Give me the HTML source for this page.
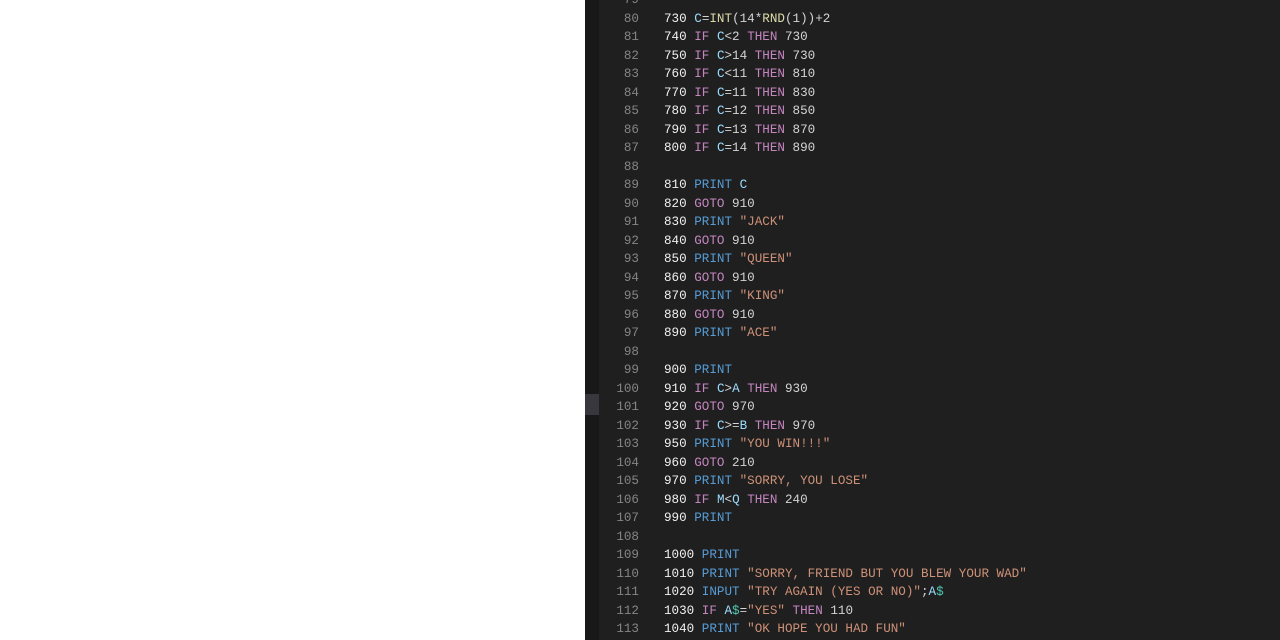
<!DOCTYPE html>
<html><head><meta charset="utf-8"><style>
html,body{margin:0;padding:0;width:1280px;height:640px;overflow:hidden;background:#fff}
#ed{position:absolute;left:585px;top:0;width:695px;height:640px;background:#1f1f1f}
#strip{position:absolute;left:0;top:0;width:14px;height:640px;background:#181818}
#hl{position:absolute;left:0;top:394px;width:14px;height:21px;background:#37373d}
.r{position:absolute;left:0;height:18.5px;line-height:18.5px;font-family:"Liberation Mono",monospace;font-size:12.6px;white-space:pre;color:#d4d4d4}
.n{position:absolute;left:0;color:#858585;text-align:right;width:54px}
.c{position:absolute;left:79px}
.l{color:#f0f0f0}
.k{color:#c586c0}.p{color:#569cd6}.v{color:#9cdcfe}.s{color:#ce9178}.f{color:#dcdcaa}.t{color:#4ec9b0}
#x{position:absolute;left:585px;top:1px}
</style></head><body>
<div id="ed"><div id="strip"></div><div id="hl"></div></div>
<div id="x">
<div class="r" style="top:-9.8px"><span class="n">79</span></div>
<div class="r" style="top:8.7px"><span class="n">80</span><span class="c"><span class="l">730</span> <span class="v">C</span>=<span class="f">INT</span>(14*<span class="f">RND</span>(1))+2</span></div>
<div class="r" style="top:27.2px"><span class="n">81</span><span class="c"><span class="l">740</span> <span class="k">IF</span> <span class="v">C</span>&lt;2 <span class="k">THEN</span> 730</span></div>
<div class="r" style="top:45.7px"><span class="n">82</span><span class="c"><span class="l">750</span> <span class="k">IF</span> <span class="v">C</span>&gt;14 <span class="k">THEN</span> 730</span></div>
<div class="r" style="top:64.2px"><span class="n">83</span><span class="c"><span class="l">760</span> <span class="k">IF</span> <span class="v">C</span>&lt;11 <span class="k">THEN</span> 810</span></div>
<div class="r" style="top:82.7px"><span class="n">84</span><span class="c"><span class="l">770</span> <span class="k">IF</span> <span class="v">C</span>=11 <span class="k">THEN</span> 830</span></div>
<div class="r" style="top:101.2px"><span class="n">85</span><span class="c"><span class="l">780</span> <span class="k">IF</span> <span class="v">C</span>=12 <span class="k">THEN</span> 850</span></div>
<div class="r" style="top:119.7px"><span class="n">86</span><span class="c"><span class="l">790</span> <span class="k">IF</span> <span class="v">C</span>=13 <span class="k">THEN</span> 870</span></div>
<div class="r" style="top:138.2px"><span class="n">87</span><span class="c"><span class="l">800</span> <span class="k">IF</span> <span class="v">C</span>=14 <span class="k">THEN</span> 890</span></div>
<div class="r" style="top:156.7px"><span class="n">88</span></div>
<div class="r" style="top:175.2px"><span class="n">89</span><span class="c"><span class="l">810</span> <span class="p">PRINT</span> <span class="v">C</span></span></div>
<div class="r" style="top:193.7px"><span class="n">90</span><span class="c"><span class="l">820</span> <span class="k">GOTO</span> 910</span></div>
<div class="r" style="top:212.2px"><span class="n">91</span><span class="c"><span class="l">830</span> <span class="p">PRINT</span> <span class="s">"JACK"</span></span></div>
<div class="r" style="top:230.7px"><span class="n">92</span><span class="c"><span class="l">840</span> <span class="k">GOTO</span> 910</span></div>
<div class="r" style="top:249.2px"><span class="n">93</span><span class="c"><span class="l">850</span> <span class="p">PRINT</span> <span class="s">"QUEEN"</span></span></div>
<div class="r" style="top:267.7px"><span class="n">94</span><span class="c"><span class="l">860</span> <span class="k">GOTO</span> 910</span></div>
<div class="r" style="top:286.2px"><span class="n">95</span><span class="c"><span class="l">870</span> <span class="p">PRINT</span> <span class="s">"KING"</span></span></div>
<div class="r" style="top:304.7px"><span class="n">96</span><span class="c"><span class="l">880</span> <span class="k">GOTO</span> 910</span></div>
<div class="r" style="top:323.2px"><span class="n">97</span><span class="c"><span class="l">890</span> <span class="p">PRINT</span> <span class="s">"ACE"</span></span></div>
<div class="r" style="top:341.7px"><span class="n">98</span></div>
<div class="r" style="top:360.2px"><span class="n">99</span><span class="c"><span class="l">900</span> <span class="p">PRINT</span></span></div>
<div class="r" style="top:378.7px"><span class="n">100</span><span class="c"><span class="l">910</span> <span class="k">IF</span> <span class="v">C</span>&gt;<span class="v">A</span> <span class="k">THEN</span> 930</span></div>
<div class="r" style="top:397.2px"><span class="n">101</span><span class="c"><span class="l">920</span> <span class="k">GOTO</span> 970</span></div>
<div class="r" style="top:415.7px"><span class="n">102</span><span class="c"><span class="l">930</span> <span class="k">IF</span> <span class="v">C</span>&gt;=<span class="v">B</span> <span class="k">THEN</span> 970</span></div>
<div class="r" style="top:434.2px"><span class="n">103</span><span class="c"><span class="l">950</span> <span class="p">PRINT</span> <span class="s">"YOU WIN!!!"</span></span></div>
<div class="r" style="top:452.7px"><span class="n">104</span><span class="c"><span class="l">960</span> <span class="k">GOTO</span> 210</span></div>
<div class="r" style="top:471.2px"><span class="n">105</span><span class="c"><span class="l">970</span> <span class="p">PRINT</span> <span class="s">"SORRY, YOU LOSE"</span></span></div>
<div class="r" style="top:489.7px"><span class="n">106</span><span class="c"><span class="l">980</span> <span class="k">IF</span> <span class="v">M</span>&lt;<span class="v">Q</span> <span class="k">THEN</span> 240</span></div>
<div class="r" style="top:508.2px"><span class="n">107</span><span class="c"><span class="l">990</span> <span class="p">PRINT</span></span></div>
<div class="r" style="top:526.7px"><span class="n">108</span></div>
<div class="r" style="top:545.2px"><span class="n">109</span><span class="c"><span class="l">1000</span> <span class="p">PRINT</span></span></div>
<div class="r" style="top:563.7px"><span class="n">110</span><span class="c"><span class="l">1010</span> <span class="p">PRINT</span> <span class="s">"SORRY, FRIEND BUT YOU BLEW YOUR WAD"</span></span></div>
<div class="r" style="top:582.2px"><span class="n">111</span><span class="c"><span class="l">1020</span> <span class="p">INPUT</span> <span class="s">"TRY AGAIN (YES OR NO)"</span>;<span class="v">A</span><span class="t">$</span></span></div>
<div class="r" style="top:600.7px"><span class="n">112</span><span class="c"><span class="l">1030</span> <span class="k">IF</span> <span class="v">A</span><span class="t">$</span>=<span class="s">"YES"</span> <span class="k">THEN</span> 110</span></div>
<div class="r" style="top:619.2px"><span class="n">113</span><span class="c"><span class="l">1040</span> <span class="p">PRINT</span> <span class="s">"OK HOPE YOU HAD FUN"</span></span></div>
</div>
</body></html>
